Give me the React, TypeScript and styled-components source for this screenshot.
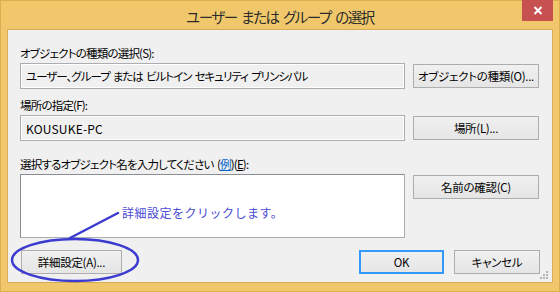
import React from "react";
import styled, { createGlobalStyle } from "styled-components";

const Global = createGlobalStyle`
  html, body { margin: 0; padding: 0; background: #f0c86b; }
  * { box-sizing: border-box; }
`;

const FONT = `"Noto Sans CJK JP", "Noto Sans", sans-serif`;

const Window = styled.div`
  width: 560px;
  height: 292px;
  background: #f0c86b;
  border: 1px solid #dcae4e;
  display: flex;
  flex-direction: column;
  font-family: ${FONT};
  font-feature-settings: "palt";
  position: relative;
`;

const TitleBar = styled.div`
  height: 28px;
  position: relative;
  display: flex;
  align-items: center;
  justify-content: center;
`;

const Title = styled.div`
  font-size: 14.5px;
  color: #2b2b2b;
  margin-top: 3px;
  letter-spacing: -1.4px;
  word-spacing: 2.5px;
  white-space: pre;
`;

const CloseButton = styled.div`
  position: absolute;
  top: -1px;
  right: 6px;
  width: 31px;
  height: 21px;
  background: #c75050;
  display: flex;
  align-items: center;
  justify-content: center;
`;

const Client = styled.div`
  margin: 0 6px 0 6px;
  height: 254px;
  background: #f0f0f0;
  border: 1px solid #d6ad55;
  position: relative;
  padding: 15px 12px 0 12px;
  display: flex;
  flex-direction: column;
  font-size: 11.5px;
  letter-spacing: -0.8px;
  word-spacing: 1.5px;
`;

const Section = styled.div<{ $gap: number }>`
  display: grid;
  grid-template-columns: 385px 126px;
  column-gap: 8px;
  margin-bottom: ${(p) => p.$gap}px;
`;

const Label = styled.div`
  grid-column: 1 / span 2;
  line-height: 16px;
  color: #000;
  height: 18px;
  white-space: pre;
`;

const Field = styled.div<{ $latin?: boolean }>`
  height: 26px;
  border: 1px solid #abadb3;
  background: #f0f0f0;
  box-shadow: inset 0 0 0 1px #ffffff;
  color: #000;
  display: flex;
  align-items: center;
  padding-left: 5px;
  white-space: pre;
  font-size: ${(p) => (p.$latin ? "12px" : "11.5px")};
  letter-spacing: ${(p) => (p.$latin ? "0.2px" : "-1px")};
`;

const TextArea = styled.div`
  height: 64px;
  border: 1px solid #abadb3;
  border-left-color: #8a8d94;
  border-top-color: #8a8d94;
  background: #ffffff;
  position: relative;
`;

const Button = styled.div<{ $primary?: boolean; $w?: number }>`
  height: 24px;
  margin-top: 1px;
  width: ${(p) => (p.$w ? `${p.$w}px` : "auto")};
  border: 1px solid ${(p) => (p.$primary ? "#3399ff" : "#adadad")};
  box-shadow: ${(p) => (p.$primary ? "inset 0 0 0 1px #3399ff" : "none")};
  background: linear-gradient(#f0f0f0, #e5e5e5);
  color: #000;
  display: flex;
  align-items: center;
  justify-content: center;
  white-space: nowrap;
  letter-spacing: -0.3px;
`;

const Link = styled.span`
  color: #0066cc;
  text-decoration: underline;
`;

const Key = styled.span`
  text-decoration: underline;
`;

const Footer = styled.div`
  margin-top: 11px;
  display: flex;
  align-items: center;
  padding-left: 1px;
`;

const Spacer = styled.div`
  flex: 1;
`;

const FooterRight = styled.div`
  display: flex;
  gap: 10px;
`;

const Note = styled.div`
  position: absolute;
  left: 101px;
  top: 29px;
  font-size: 12px;
  letter-spacing: 0.5px;
  font-feature-settings: normal;
  color: #4a4ad6;
  white-space: nowrap;
`;

const Overlay = styled.svg`
  position: absolute;
  left: 0;
  top: 0;
  pointer-events: none;
`;

const Grip = styled.svg`
  position: absolute;
  right: 3px;
  bottom: 2px;
`;

export default function App() {
  return (
    <>
      <Global />
      <Window>
        <TitleBar>
          <Title>ユーザー または グループ の選択</Title>
          <CloseButton>
            <svg width="10" height="9" viewBox="0 0 10 9">
              <path d="M1.5 1 L8.5 8 M8.5 1 L1.5 8" stroke="#fff" strokeWidth="2" />
            </svg>
          </CloseButton>
        </TitleBar>
        <Client>
          <Section $gap={8}>
            <Label>オブジェクトの種類の選択(S):</Label>
            <Field>ユーザー、グループ または ビルトイン セキュリティ プリンシパル</Field>
            <Button>オブジェクトの種類(O)...</Button>
          </Section>
          <Section $gap={15}>
            <Label>場所の指定(F):</Label>
            <Field $latin>KOUSUKE-PC</Field>
            <Button>場所(L)...</Button>
          </Section>
          <Section $gap={0}>
            <Label>
              選択するオブジェクト名を入力してください (<Link>例</Link>)(<Key>E</Key>):
            </Label>
            <TextArea>
              <Note>詳細設定をクリックします。</Note>
            </TextArea>
            <Button>名前の確認(C)</Button>
          </Section>
          <Footer>
            <Button $w={101}>詳細設定(A)...</Button>
            <Spacer />
            <FooterRight>
              <Button $primary $w={85}>OK</Button>
              <Button $w={86}>キャンセル</Button>
            </FooterRight>
          </Footer>
          <Overlay width="545" height="254" viewBox="0 0 545 254">
            <path d="M62 208 L110 183" stroke="#3b3bd0" strokeWidth="2.5" strokeLinecap="round" />
            <ellipse cx="67" cy="230" rx="63" ry="21" fill="none" stroke="#3b3bd0" strokeWidth="2.5" />
          </Overlay>
          <Grip width="10" height="10" viewBox="0 0 10 10">
            <rect x="7" y="1" width="2" height="2" fill="#b5b5b5" />
            <rect x="4" y="4" width="2" height="2" fill="#b5b5b5" />
            <rect x="7" y="4" width="2" height="2" fill="#b5b5b5" />
            <rect x="1" y="7" width="2" height="2" fill="#b5b5b5" />
            <rect x="4" y="7" width="2" height="2" fill="#b5b5b5" />
            <rect x="7" y="7" width="2" height="2" fill="#b5b5b5" />
          </Grip>
        </Client>
      </Window>
    </>
  );
}
